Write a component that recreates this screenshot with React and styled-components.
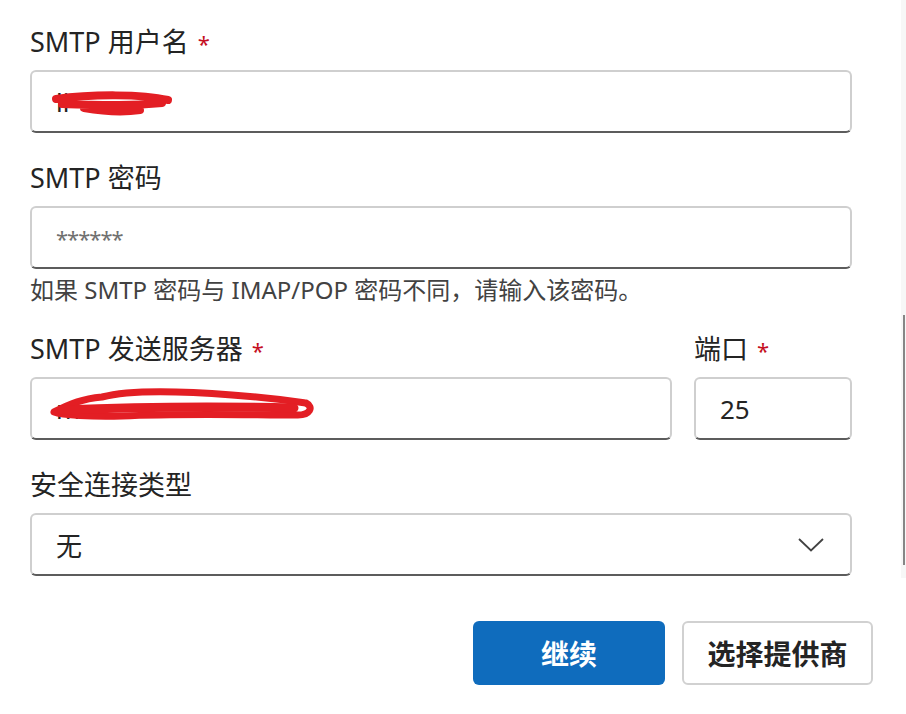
import React from "react";
import styled, { createGlobalStyle } from "styled-components";

const Global = createGlobalStyle`
  html, body { margin: 0; padding: 0; background: #ffffff; }
  body {
    font-family: "Noto Sans", "Noto Sans CJK SC", sans-serif;
    color: #242424;
  }
  * { box-sizing: border-box; }
`;

const Page = styled.div`
  display: flex;
  width: 906px;
  height: 714px;
  overflow: hidden;
`;

const Main = styled.div`
  flex: 1;
  display: flex;
  flex-direction: column;
  padding: 24px 0 0 30px;
`;

const Form = styled.div`
  width: 822px;
  display: flex;
  flex-direction: column;
  gap: 27px;
`;

const Field = styled.div`
  display: flex;
  flex-direction: column;
  flex: ${(p) => p.$flex || "none"};
  width: ${(p) => p.$width || "auto"};
`;

const Row = styled.div`
  display: flex;
  gap: 22px;
`;

const Label = styled.div`
  font-size: 27px;
  line-height: 36px;
  height: 36px;
  margin-bottom: 10px;
  color: #242424;
  white-space: nowrap;
`;

const Star = styled.span`
  color: #c50f1f;
  margin-left: 9px;
  font-size: 22px;
`;

const Box = styled.div`
  position: relative;
  height: 63px;
  border: 2px solid #cfcfcf;
  border-bottom: 2px solid #5c5c5c;
  border-radius: 6px;
  background: #fff;
  display: flex;
  align-items: center;
  padding: 0 24px;
  font-size: 26px;
  color: #242424;
`;

const Placeholder = styled.span`
  font-size: 22px;
  letter-spacing: -1px;
  color: #707070;
`;

const Hint = styled.div`
  font-size: 24px;
  line-height: 28px;
  margin-top: 7px;
  color: #424242;
  white-space: nowrap;
`;

const Scribble = styled.svg`
  position: absolute;
  left: 0;
  top: 0;
  pointer-events: none;
`;

const Chevron = styled.svg`
  margin-left: auto;
  margin-right: 2px;
`;

const Footer = styled.div`
  display: flex;
  justify-content: flex-end;
  gap: 17px;
  margin-top: 45px;
  padding-right: 28px;
`;

const Button = styled.button`
  width: ${(p) => (p.$primary ? "192px" : "191px")};
  height: 64px;
  border-radius: 6px;
  font-family: "Noto Sans", "Noto Sans CJK SC", sans-serif;
  font-size: 28px;
  font-weight: 700;
  cursor: pointer;
  background: ${(p) => (p.$primary ? "#0f6cbd" : "#ffffff")};
  color: ${(p) => (p.$primary ? "#ffffff" : "#242424")};
  border: ${(p) => (p.$primary ? "none" : "2px solid #d1d1d1")};
`;

const ScrollTrack = styled.div`
  width: 5px;
  height: 578px;
  background: #f7f7f7;
  display: flex;
  flex-direction: column;
  align-items: flex-end;
  padding-top: 315px;
`;

const Thumb = styled.div`
  width: 2px;
  height: 250px;
  background: #868686;
  margin-right: 1px;
`;

export default function App() {
  return (
    <>
      <Global />
      <Page>
        <Main>
          <Form>
            <Field>
              <Label>
                SMTP 用户名<Star>*</Star>
              </Label>
              <Box>
                <span>li</span>
                <Scribble width="200" height="59" viewBox="0 0 200 59">
                  <path
                    d="M24 27 C60 22 110 22 136 28 M30 32 C70 33 100 34 130 31 M52 36 C75 40 95 40 108 38"
                    stroke="#e31e24"
                    strokeWidth="8"
                    strokeLinecap="round"
                    fill="none"
                  />
                </Scribble>
              </Box>
            </Field>
            <Field>
              <Label>SMTP 密码</Label>
              <Box>
                <Placeholder>******</Placeholder>
              </Box>
              <Hint>如果 SMTP 密码与 IMAP/POP 密码不同，请输入该密码。</Hint>
            </Field>
            <Row>
              <Field $flex="1">
                <Label>
                  SMTP 发送服务器<Star>*</Star>
                </Label>
                <Box>
                  <span>m</span>
                  <Scribble width="320" height="59" viewBox="0 0 320 59">
                    <path
                      d="M22 33 C40 24 50 20 70 18 C100 10 150 12 200 16 C240 19 260 22 274 24 C282 28 278 36 266 36 C220 36 150 34 90 37 C60 38 30 36 22 33 Z"
                      stroke="#e31e24"
                      strokeWidth="7"
                      strokeLinejoin="round"
                      fill="none"
                    />
                    <path
                      d="M30 31 C100 28 180 27 262 29"
                      stroke="#e31e24"
                      strokeWidth="9"
                      strokeLinecap="round"
                      fill="none"
                    />
                  </Scribble>
                </Box>
              </Field>
              <Field $width="158px">
                <Label>
                  端口<Star>*</Star>
                </Label>
                <Box>25</Box>
              </Field>
            </Row>
            <Field>
              <Label>安全连接类型</Label>
              <Box>
                无
                <Chevron width="26" height="14" viewBox="0 0 26 14">
                  <path
                    d="M1 1 L13 12.5 L25 1"
                    stroke="#424242"
                    strokeWidth="1.8"
                    fill="none"
                  />
                </Chevron>
              </Box>
            </Field>
          </Form>
          <Footer>
            <Button $primary>继续</Button>
            <Button>选择提供商</Button>
          </Footer>
        </Main>
        <ScrollTrack>
          <Thumb />
        </ScrollTrack>
      </Page>
    </>
  );
}
